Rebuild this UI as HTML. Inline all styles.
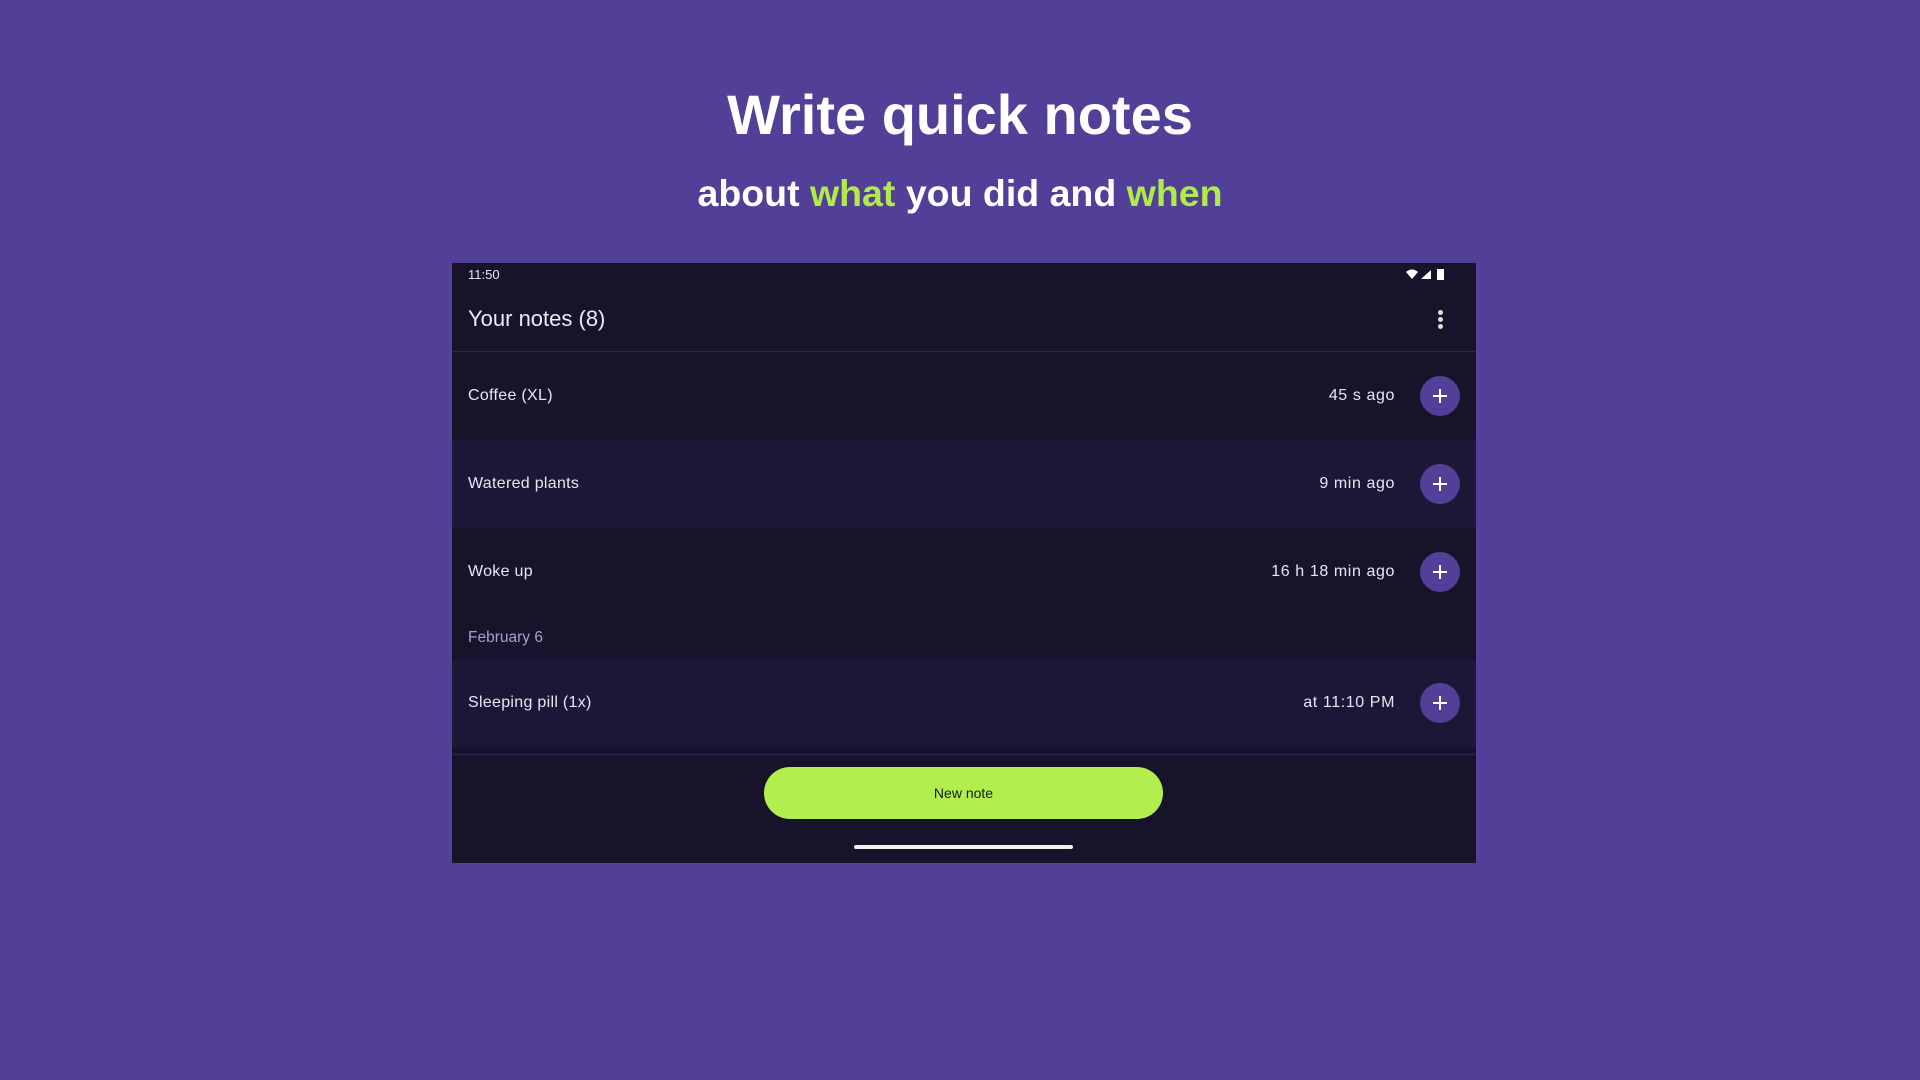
<!DOCTYPE html>
<html><head><meta charset="utf-8"><style>
*{margin:0;padding:0;box-sizing:border-box}
body{width:1920px;height:1080px;background:#523f98;position:relative;overflow:hidden;font-family:"Liberation Sans",sans-serif}
.t1{position:absolute;left:0;width:1920px;text-align:center;color:#fff;font-weight:bold}
.g{color:#b2ea4a}
.frame{position:absolute;left:452px;top:263px;width:1024px;height:600px;background:#16132b;color:#e9e6f2}
.abs{position:absolute}
.row{position:absolute;left:0;width:1024px;height:88px}
.row .l{position:absolute;left:16px;top:0;line-height:88px;font-size:16px;letter-spacing:.3px}
.row .r{position:absolute;right:81px;top:0;line-height:88px;font-size:16px;letter-spacing:.6px}
.plus{position:absolute;left:968px;top:24px;width:40px;height:40px;border-radius:50%;background:#523f98}
.plus:before,.plus:after{content:"";position:absolute;background:#fff;left:13px;top:19px;width:14px;height:2px}
.plus:after{left:19px;top:13px;width:2px;height:14px}
</style></head><body>
<div class="t1" style="top:82px;font-size:56px;line-height:66px">Write quick notes</div>
<div class="t1" style="top:171px;font-size:37.5px;line-height:44px">about <span class="g">what</span> you did and <span class="g">when</span></div>
<div class="frame">
 <div class="abs" style="left:16px;top:4px;font-size:13px;line-height:16px">11:50</div>
 <svg class="abs" style="left:952px;top:5px" width="50" height="14" viewBox="0 0 50 14">
  <path d="M2 4 Q8 -1 14 4 L8 11 Z" fill="#fff"/>
  <path d="M17 11 L27 2 L27 11 Z" fill="#fff"/>
  <rect x="33" y="1" width="7" height="11" fill="#fff"/>
 </svg>
 <div class="abs" style="left:16px;top:42px;font-size:22px;line-height:28px;color:#ece9f5">Your notes (8)</div>
 <div class="abs" style="left:986px;top:47px;width:5px;height:5px;border-radius:50%;background:#ddd"></div>
 <div class="abs" style="left:986px;top:54px;width:5px;height:5px;border-radius:50%;background:#ddd"></div>
 <div class="abs" style="left:986px;top:61px;width:5px;height:5px;border-radius:50%;background:#ddd"></div>
 <div class="abs" style="left:0;top:88px;width:1024px;height:1px;background:#2b2352"></div>
 <div class="row" style="top:89px;background:#16132b"><div class="l">Coffee (XL)</div><div class="r">45 s ago</div><div class="plus"></div></div>
 <div class="row" style="top:177px;background:#1b1736"><div class="l">Watered plants</div><div class="r">9 min ago</div><div class="plus"></div></div>
 <div class="row" style="top:265px;background:#16132b"><div class="l">Woke up</div><div class="r">16 h 18 min ago</div><div class="plus"></div></div>
 <div class="abs" style="left:16px;top:365px;font-size:15.5px;line-height:20px;color:#a99fcf">February 6</div>
 <div class="row" style="top:396px;background:#1b1736"><div class="l">Sleeping pill (1x)</div><div class="r">at 11:10 PM</div><div class="plus"></div></div>
 <div class="abs" style="left:0;top:491px;width:1024px;height:1px;background:#2b2352"></div>
 <div class="abs" style="left:312px;top:504px;width:399px;height:52px;border-radius:26px;background:#b2ee4e;color:#1a1a1a;font-size:14px;line-height:52px;text-align:center">New note</div>
 <div class="abs" style="left:402px;top:582px;width:219px;height:4px;border-radius:2px;background:#eee"></div>
</div>
</body></html>
